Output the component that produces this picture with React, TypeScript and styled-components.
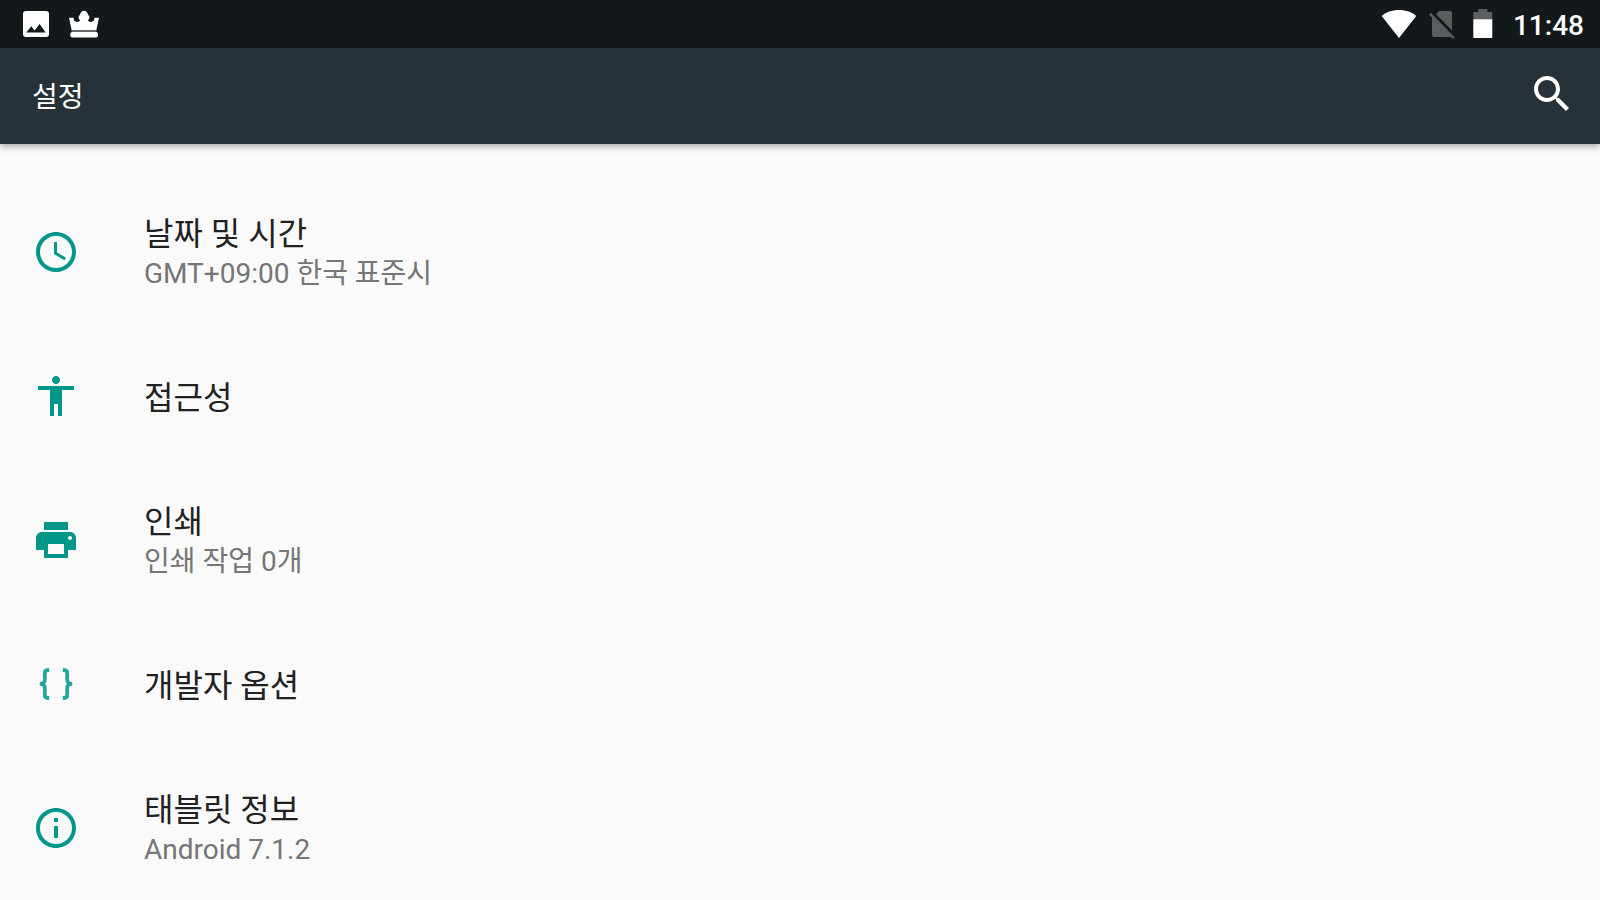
import React from 'react';
import styled, { createGlobalStyle } from 'styled-components';

const GlobalStyle = createGlobalStyle`
  *, *::before, *::after { box-sizing: border-box; }
  body {
    margin: 0;
    background: #fafafa;
    color: #212121;
    font-family: Roboto, "Noto Sans CJK KR", sans-serif;
  }
`;

const Screen = styled.div`
  display: flex;
  flex-direction: column;
  min-height: 100vh;
`;

const StatusBar = styled.div`
  position: relative;
  z-index: 1;
  display: flex;
  align-items: center;
  justify-content: space-between;
  height: 48px;
  padding: 0 16px 0 20px;
  background: #13181b;
  color: #fff;
`;

const StatusGroup = styled.div<{ $gap: number }>`
  display: flex;
  align-items: center;
  gap: ${(p) => p.$gap}px;
`;

const Clock = styled.time`
  margin-left: 8px;
  padding-top: 4px;
  font-size: 28px;
  line-height: 32px;
  font-weight: 500;
`;

const AppBar = styled.header`
  display: flex;
  align-items: center;
  justify-content: space-between;
  height: 96px;
  padding: 0 24px 0 32px;
  background: #263238;
  color: #fff;
  box-shadow: 0 1px 8px rgba(0, 0, 0, 0.45);
`;

const AppTitle = styled.h1`
  margin: 0;
  padding-top: 4px;
  font-size: 28px;
  line-height: 40px;
  font-weight: 400;
`;

const IconButton = styled.button`
  display: flex;
  margin: 0;
  padding: 0 0 4px;
  border: 0;
  background: none;
  color: inherit;
  cursor: pointer;
`;

const List = styled.ul`
  margin: 0;
  padding: 36px 0 0;
  list-style: none;
`;

const RowLink = styled.a`
  display: flex;
  align-items: center;
  gap: 64px;
  height: 144px;
  padding: 0 32px;
  color: inherit;
  text-decoration: none;
`;

const RowIcon = styled.svg`
  flex: none;
  width: 48px;
  height: 48px;
  fill: #009688;
`;

const RowText = styled.div`
  display: flex;
  flex-direction: column;
  padding-top: 4px;
`;

const RowTitle = styled.span`
  font-size: 32px;
  line-height: 40px;
`;

const RowSummary = styled.span`
  font-size: 28px;
  line-height: 40px;
  color: #757575;
`;

type Item = { title: string; summary?: string; icon: React.ReactNode };

const items: Item[] = [
  {
    title: '날짜 및 시간',
    summary: 'GMT+09:00 한국 표준시',
    icon: (
      <path d="M11.99 2C6.47 2 2 6.48 2 12s4.47 10 9.99 10C17.52 22 22 17.52 22 12S17.52 2 11.99 2zM12 20c-4.42 0-8-3.58-8-8s3.58-8 8-8 8 3.58 8 8-3.58 8-8 8zm.5-13H11v6l5.25 3.15.75-1.23-4.5-2.67z" />
    ),
  },
  {
    title: '접근성',
    icon: (
      <path d="M12 2c1.1 0 2 .9 2 2s-.9 2-2 2-2-.9-2-2 .9-2 2-2zm9 7h-6v13h-2v-6h-2v6H9V9H3V7h18v2z" />
    ),
  },
  {
    title: '인쇄',
    summary: '인쇄 작업 0개',
    icon: (
      <path d="M19 8H5c-1.66 0-3 1.34-3 3v6h4v4h12v-4h4v-6c0-1.66-1.34-3-3-3zm-3 11H8v-5h8v5zm3-7c-.55 0-1-.45-1-1s.45-1 1-1 1 .45 1 1-.45 1-1 1zm-1-9H6v4h12V3z" />
    ),
  },
  {
    title: '개발자 옵션',
    icon: (
      <g fill="none" stroke="#26a69a" strokeWidth="1.9">
        <path d="M8.6 5.1H8c-1 0-1.6.6-1.6 1.6v3.2c0 1.2-.5 1.8-2.4 2 1.9.2 2.4.8 2.4 2v3.5c0 1 .6 1.6 1.6 1.6h.6" />
        <path d="M15.4 5.1h.6c1 0 1.6.6 1.6 1.6v3.2c0 1.2.5 1.8 2.4 2-1.9.2-2.4.8-2.4 2v3.5c0 1-.6 1.6-1.6 1.6h-.6" />
      </g>
    ),
  },
  {
    title: '태블릿 정보',
    summary: 'Android 7.1.2',
    icon: (
      <path d="M11 17h2v-6h-2v6zm1-15C6.48 2 2 6.48 2 12s4.48 10 10 10 10-4.48 10-10S17.52 2 12 2zm0 18c-4.41 0-8-3.59-8-8s3.59-8 8-8 8 3.59 8 8-3.59 8-8 8zM11 9h2V7h-2v2z" />
    ),
  },
];

const ImageIcon = () => (
  <svg width="32" height="32" viewBox="0 0 32 32" fill="#fff" aria-hidden="true">
    <path
      fillRule="evenodd"
      d="M6 3h20a3 3 0 0 1 3 3v20a3 3 0 0 1-3 3H6a3 3 0 0 1-3-3V6a3 3 0 0 1 3-3zM6.3 24.5h19.4L19.6 16l-5 6.4-3.3-4.2z"
    />
  </svg>
);

const CrownIcon = () => (
  <svg width="32" height="32" viewBox="0 0 32 32" fill="#fff" aria-hidden="true">
    <path d="M3.6 22 1 9.8h4.5c.2 2.3 1.2 4.2 3.2 4.2 1.6 0 2.9-.5 3.6-1.4-1.5-1-1.9-2.7-1.5-4.5.7-.4 1.1-1 1.300-2C13 3.8 14.3 2.7 16 2.7s3 1.1 3.9 3.4c.2 1 .6 1.6 1.3 2 .4 1.8 0 3.5-1.5 4.5.7.9 2 1.4 3.6 1.4 2 0 3-1.9 3.2-4.2H31L28.4 22z" />
    <path d="M3.6 22h24.800v2H3.600z" opacity=".35" />
    <rect x="2.3" y="24" width="27.7" height="5.4" rx="2" />
  </svg>
);

const WifiIcon = () => (
  <svg width="36" height="32" viewBox="0 0 36 32" fill="#fff" aria-hidden="true">
    <path d="M18 30 .7 8C4.500 4.200 11 2 18 2s13.500 2.200 17.300 6z" />
  </svg>
);

const NoSimIcon = () => (
  <svg width="28" height="32" viewBox="1 0 28 32" fill="#5c5e60" aria-hidden="true">
    <path d="M8 6.300 11.300 3H22a2 2 0 0 1 2 2v17.500zM4 9.600 23.100 29H6a2 2 0 0 1-2-2z" />
    <path d="M2.800 4.800 1 6.400l24.100 24.800 1.600-1.600z" />
  </svg>
);

const BatteryIcon = () => (
  <svg width="24" height="32" viewBox="-4 0 24 32" aria-hidden="true">
    <path d="M5.300 1h9v3h5v8H.3V4h5z" fill="#5c5e60" />
    <path d="M.3 11.300h19V30H.3z" fill="#fff" />
  </svg>
);

export default function App() {
  return (
    <Screen>
      <GlobalStyle />
      <StatusBar>
        <StatusGroup $gap={16}>
          <ImageIcon />
          <CrownIcon />
        </StatusGroup>
        <StatusGroup $gap={12}>
          <WifiIcon />
          <NoSimIcon />
          <BatteryIcon />
          <Clock>11:48</Clock>
        </StatusGroup>
      </StatusBar>
      <AppBar>
        <AppTitle>설정</AppTitle>
        <IconButton type="button" aria-label="검색">
          <svg width="48" height="48" viewBox="0 0 24 24" fill="currentColor" aria-hidden="true">
            <path d="M15.500 14h-.79l-.28-.27C15.410 12.590 16 11.110 16 9.500 16 5.910 13.090 3 9.500 3S3 5.910 3 9.500 5.910 16 9.500 16c1.610 0 3.090-.59 4.230-1.570l.27.28v.79l5 4.990L20.490 19l-4.990-5zm-6 0C7.010 14 5 11.990 5 9.500S7.010 5 9.500 5 14 7.010 14 9.500 11.990 14 9.500 14z" />
          </svg>
        </IconButton>
      </AppBar>
      <main>
        <List>
          {items.map((item) => (
            <li key={item.title}>
              <RowLink href="#">
                <RowIcon viewBox="0 0 24 24" aria-hidden="true">
                  {item.icon}
                </RowIcon>
                <RowText>
                  <RowTitle>{item.title}</RowTitle>
                  {item.summary && <RowSummary>{item.summary}</RowSummary>}
                </RowText>
              </RowLink>
            </li>
          ))}
        </List>
      </main>
    </Screen>
  );
}
